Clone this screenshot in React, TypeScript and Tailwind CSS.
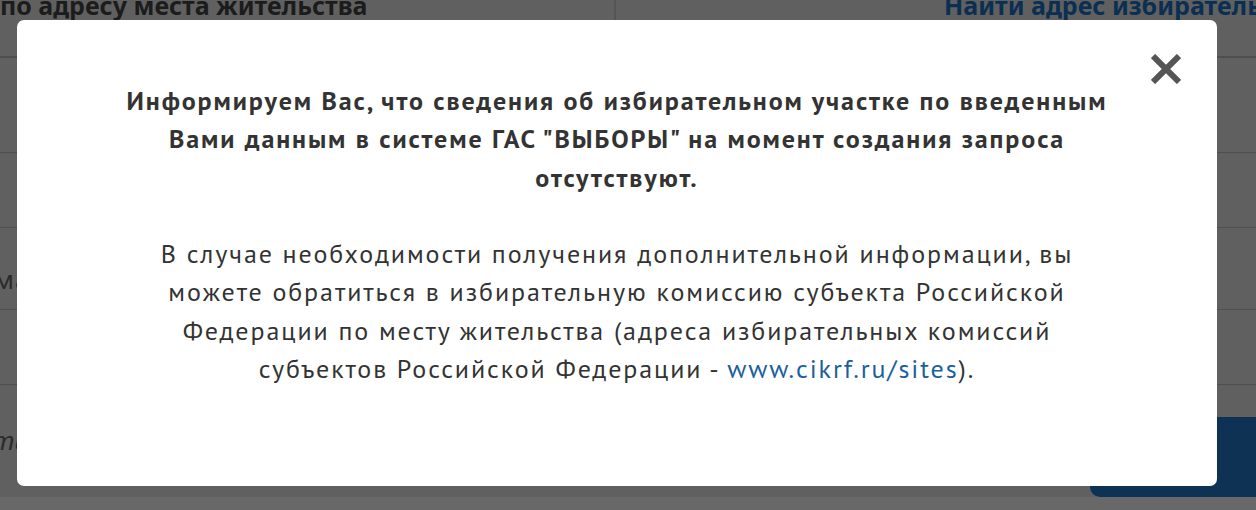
const font = { fontFamily: '"PT Sans", "Noto Sans", sans-serif' }

const Row = ({ children }: { children?: React.ReactNode }) => (
  <div className="flex h-full border-b border-[#4f4f4f]">{children}</div>
)

const CloseIcon = () => (
  <svg width="30" height="30" viewBox="0 0 30 30" fill="none">
    <path d="M2 2 L28 28 M28 2 L2 28" stroke="currentColor" strokeWidth="6" />
  </svg>
)

const App = () => {
  return (
    <div className="relative h-[510px] w-[1256px] overflow-hidden bg-[#606060] font-['Noto_Sans',sans-serif]">
      {/* page under overlay */}
      <div className="flex h-full flex-col">
        <div className="flex h-[58px] shrink-0 border-b-2 border-[#4f4f4f]">
          <div className="w-[616px] shrink-0 border-r-2 border-[#555]">
            <span className="-mt-[13px] block whitespace-nowrap text-[25px] leading-[36px] font-bold text-[#1c1c1c]">
              по адресу места жительства
            </span>
          </div>
          <div className="min-w-0 flex-1 pl-[328px]">
            <span className="-mt-[13px] block whitespace-nowrap text-[25px] leading-[36px] font-bold text-[#0b2f52]">
              Найти адрес избирательного участка
            </span>
          </div>
        </div>
        <div className="h-[95px] shrink-0">
          <Row />
        </div>
        <div className="h-[75px] shrink-0">
          <Row />
        </div>
        <div className="h-[82px] shrink-0">
          <Row>
            <span className="-ml-[6px] pt-[32px] text-[26px] tracking-[1px] text-[#2a2a2a]">ма</span>
          </Row>
        </div>
        <div className="h-[75px] shrink-0">
          <Row />
        </div>
        <div className="flex h-[112px] shrink-0 items-start justify-between">
          <span className="-ml-[8px] pt-[36px] text-[26px] italic text-[#2a2a2a]">ти</span>
          <div className="mt-[32px] h-[80px] w-[166px] rounded-l-[10px] bg-[#0d3253]" />
        </div>
        <div className="flex-1 bg-[#686868]" />
      </div>

      {/* modal */}
      <div className="absolute left-[17px] top-[20px] h-[466px] w-[1200px] rounded-[7px] bg-white">
        <button className="absolute right-[36px] top-[34px] text-[#555]">
          <CloseIcon />
        </button>
        <div
          className="pt-[62px] text-center text-[26px] leading-[38.3px] tracking-[1.9px] text-[#333]"
          style={font}
        >
          <p className="font-bold">
            Информируем Вас, что сведения об избирательном участке по введенным
            <br />
            Вами данным в системе ГАС "ВЫБОРЫ" на момент создания запроса
            <br />
            отсутствуют.
          </p>
          <p className="mt-[38.3px]">
            В случае необходимости получения дополнительной информации, вы
            <br />
            можете обратиться в избирательную комиссию субъекта Российской
            <br />
            Федерации по месту жительства (адреса избирательных комиссий
            <br />
            субъектов Российской Федерации - <a className="text-[#1b5f9c]">www.cikrf.ru/sites</a>).
          </p>
        </div>
      </div>
    </div>
  )
}

export default App
